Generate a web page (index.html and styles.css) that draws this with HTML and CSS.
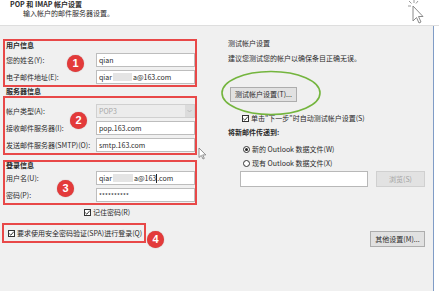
FILE: index.html
```html
<!DOCTYPE html>
<html lang="zh-CN">

<head>
  <meta charset="UTF-8" />
  <meta name="viewport" content="width=device-width, initial-scale=1.0" />
  <title>POP 和 IMAP 帐户设置</title>
  <link rel="stylesheet" href="styles.css">
</head>

<body>
  <div class="header">
    <div class="title">POP 和 IMAP 帐户设置</div>
    <div class="subtitle">输入帐户的邮件服务器设置。</div>
    <svg class="cursor-top" width="22" height="24" viewBox="0 0 22 24">
      <path d="M5 6 L5 21 L8.5 17.5 L11 23 L13 22 L10.5 16.5 L15 16.5 Z" fill="#fff" stroke="#8a8a8a" stroke-width="1" stroke-linejoin="round" />
      <path d="M1 1 L3.5 3.5 M6 0 L6 3 M10 1 L8 3.5 M0 6 L3 6" stroke="#9a9a9a" stroke-width="1" />
    </svg>
  </div>

  <div class="main">
    <div class="left">
      <div class="group">
        <div class="group-title">用户信息</div>
        <div class="row">
          <label class="label">您的姓名(Y):</label>
          <div class="field">qian</div>
        </div>
        <div class="row">
          <label class="label">电子邮件地址(E):</label>
          <div class="field">qiar<span class="blur"></span>a@163.com</div>
        </div>
        <span class="badge badge-1">1</span>
      </div>

      <div class="group-title outside">服务器信息</div>
      <div class="group group-server">
        <div class="row">
          <label class="label">帐户类型(A):</label>
          <div class="field select">POP3<span class="arrow"><svg width="5" height="4" viewBox="0 0 5 4"><path d="M0.5 1 L2.5 3 L4.5 1" fill="none" stroke="#b5b5b5" stroke-width="0.8" /></svg></span></div>
        </div>
        <div class="row">
          <label class="label">接收邮件服务器(I):</label>
          <div class="field">pop.163.com</div>
        </div>
        <div class="row">
          <label class="label">发送邮件服务器(SMTP)(O):</label>
          <div class="field">smtp.163.com</div>
        </div>
        <span class="badge badge-2">2</span>
      </div>

      <div class="group group-login">
        <div class="group-title">登录信息</div>
        <div class="row">
          <label class="label">用户名(U):</label>
          <div class="field">qiar<span class="blur wide"></span>a@163<span class="caret"></span>.com</div>
        </div>
        <div class="row">
          <label class="label">密码(P):</label>
          <div class="field password">**********</div>
        </div>
        <span class="badge badge-3">3</span>
      </div>

      <div class="check-row remember">
        <span class="check"><svg width="7" height="7" viewBox="0 0 7 7"><path d="M1.2 3.6 L2.8 5.2 L5.9 1.6" fill="none" stroke="#222" stroke-width="0.9" /></svg></span>
        <span>记住密码(R)</span>
      </div>

      <div class="group group-spa">
        <div class="check-row">
          <span class="check"><svg width="7" height="7" viewBox="0 0 7 7"><path d="M1.2 3.6 L2.8 5.2 L5.9 1.6" fill="none" stroke="#222" stroke-width="0.9" /></svg></span>
          <span>要求使用安全密码验证(SPA)进行登录(Q)</span>
        </div>
        <span class="badge badge-4">4</span>
      </div>
    </div>

    <div class="right">
      <div class="section-title">测试帐户设置</div>
      <div class="hint">建议您测试您的帐户以确保条目正确无误。</div>
      <button class="btn btn-test">测试帐户设置(T)...</button>
      <div class="check-row auto-test">
        <span class="check"><svg width="7" height="7" viewBox="0 0 7 7"><path d="M1.2 3.6 L2.8 5.2 L5.9 1.6" fill="none" stroke="#222" stroke-width="0.9" /></svg></span>
        <span>单击"下一步"时自动测试帐户设置(S)</span>
      </div>
      <div class="deliver-title">将新邮件传递到:</div>
      <div class="radio-row first">
        <span class="radio checked"></span>
        <span>新的 Outlook 数据文件(W)</span>
      </div>
      <div class="radio-row">
        <span class="radio"></span>
        <span>现有 Outlook 数据文件(X)</span>
      </div>
      <div class="browse-row">
        <div class="field path"></div>
        <button class="btn btn-disabled">浏览(S)</button>
      </div>
      <button class="btn btn-more">其他设置(M)...</button>

      <svg class="ring" width="104" height="48" viewBox="0 0 104 48">
        <ellipse cx="52" cy="24" rx="49" ry="21.5" fill="none" stroke="#74b53e" stroke-width="1.6" />
      </svg>
    </div>

    <svg class="cursor-mid" width="9" height="13" viewBox="0 0 9 13">
      <path d="M1 1 L1 10.5 L3.3 8.4 L5 12 L6.3 11.4 L4.7 7.9 L7.8 7.9 Z" fill="#fff" stroke="#777" stroke-width="0.8" stroke-linejoin="round" />
    </svg>
  </div>
</body>

</html>
```

FILE: styles.css
```css
body {
  margin: 0;
  background-color: #fff;
  font-family: "Noto Sans CJK SC", "Noto Sans", sans-serif;
  font-size: 7px;
  color: #2a2a2a;
}

.header {
  position: relative;
  height: 25px;
  background: #fff;
  border-bottom: 1px solid #dedede;
}

.title {
  padding-left: 10px;
  font-weight: bold;
  line-height: 9px;
}

.subtitle {
  padding-left: 23px;
  line-height: 9px;
}

.cursor-top {
  position: absolute;
  left: 408px;
  top: 0;
}

.main {
  position: relative;
  display: flex;
  width: 433px;
  height: 265px;
  background: #f0f0f0;
  border-right: 1px solid #7f9cc6;
}

.left {
  width: 197px;
  padding: 13px 0 0 3px;
  display: flex;
  flex-direction: column;
}

.group {
  position: relative;
  width: 194px;
  box-sizing: border-box;
  border: 2px solid #e84848;
  padding-left: 1px;
}

.group-title {
  font-weight: bold;
  line-height: 8px;
  margin-bottom: 3px;
}

.group-title.outside {
  line-height: 9px;
  margin: 0;
  padding-left: 3px;
}

.group-server {
  padding-top: 5px;
}

.group-login {
  margin-top: 5px;
}

.group-login .group-title {
  line-height: 6px;
  margin-bottom: 2px;
}

.row {
  display: flex;
  align-items: center;
  height: 16px;
}

.row + .row {
  margin-top: 1px;
}

.label {
  width: 90px;
}

.field {
  display: flex;
  align-items: center;
  width: 99px;
  height: 14px;
  box-sizing: border-box;
  border: 1px solid #bdbdbd;
  background: #fff;
  padding-left: 2px;
  white-space: nowrap;
}

.blur {
  display: inline-block;
  width: 19px;
  height: 8px;
  margin: 0 1px;
  background: #e4e4e4;
}

.blur.wide {
  width: 20px;
}

.caret {
  display: inline-block;
  width: 1px;
  height: 9px;
  background: #222;
}

.password {
  font-size: 6px;
  letter-spacing: 0.2px;
}

.select {
  position: relative;
  background: #ececec;
  border-color: #d0d0d0;
  color: #a8a8a8;
}

.arrow {
  position: absolute;
  right: 0;
  top: 0;
  width: 9px;
  height: 12px;
  background: #dcdcdc;
  display: flex;
  align-items: center;
  justify-content: center;
}

.check-row {
  display: flex;
  align-items: center;
  gap: 2px;
  line-height: 10px;
}

.check {
  display: inline-flex;
  width: 7px;
  height: 7px;
  box-sizing: border-box;
  border: 1px solid #333;
  background: #fff;
  align-items: center;
  justify-content: center;
}

.check svg {
  flex: none;
}

.remember {
  margin: 1px 0 0 81px;
  height: 12px;
}

.group-spa {
  width: 144px;
  margin: 5px 0 0 -1px;
  padding-left: 4px;
  height: 20px;
}

.group-spa .check-row {
  height: 16px;
}

.badge {
  position: absolute;
  width: 17px;
  height: 17px;
  border-radius: 50%;
  background: #e33a3a;
  color: #fff;
  font-family: "Liberation Sans", Arial, sans-serif;
  font-weight: bold;
  font-size: 11px;
  line-height: 17px;
  text-align: center;
  box-shadow: 0 0 1px rgba(120, 0, 0, 0.5);
}

.badge-1 {
  left: 62px;
  top: 14px;
}

.badge-2 {
  left: 65px;
  top: 14px;
}

.badge-3 {
  left: 52px;
  top: 18px;
}

.badge-4 {
  left: 143px;
  top: 6px;
}

.right {
  position: relative;
  flex: 1;
  padding: 13px 0 0 28px;
  display: flex;
  flex-direction: column;
  align-items: flex-start;
}

.section-title {
  line-height: 8px;
}

.hint {
  margin-top: 7px;
  line-height: 8px;
}

.btn {
  font-family: "Noto Sans CJK SC", "Noto Sans", sans-serif;
  font-size: 7px;
  color: #2a2a2a;
  background: #e1e1e1;
  border: 1px solid #adadad;
  padding: 0;
  height: 15px;
  line-height: 13px;
  box-sizing: border-box;
}

.btn-test {
  width: 67px;
  margin: 25px 0 0 2px;
}

.auto-test {
  margin: 11px 0 0 14px;
}

.deliver-title {
  font-weight: bold;
  line-height: 8px;
  margin-top: 5px;
}

.radio-row {
  display: flex;
  align-items: center;
  gap: 2px;
  line-height: 10px;
  margin: 4px 0 0 15px;
}

.radio-row.first {
  margin-top: 8px;
}

.radio {
  position: relative;
  width: 7px;
  height: 7px;
  box-sizing: border-box;
  border: 1px solid #333;
  border-radius: 50%;
  background: #fff;
}

.radio.checked::after {
  content: "";
  position: absolute;
  left: 1px;
  top: 1px;
  width: 3px;
  height: 3px;
  border-radius: 50%;
  background: #222;
}

.browse-row {
  display: flex;
  gap: 8px;
  margin: 3px 0 0 12px;
}

.field.path {
  width: 128px;
  height: 16px;
  border-color: #b8b8b8;
}

.btn-disabled {
  width: 49px;
  height: 16px;
  color: #a3a3a3;
  background: #e2e2e2;
  border-color: #d0d0d0;
}

.btn-more {
  width: 55px;
  height: 16px;
  margin: 44px 0 0 142px;
}

.ring {
  position: absolute;
  left: 19px;
  top: 43px;
}

.cursor-mid {
  position: absolute;
  left: 198px;
  top: 121px;
}
```
